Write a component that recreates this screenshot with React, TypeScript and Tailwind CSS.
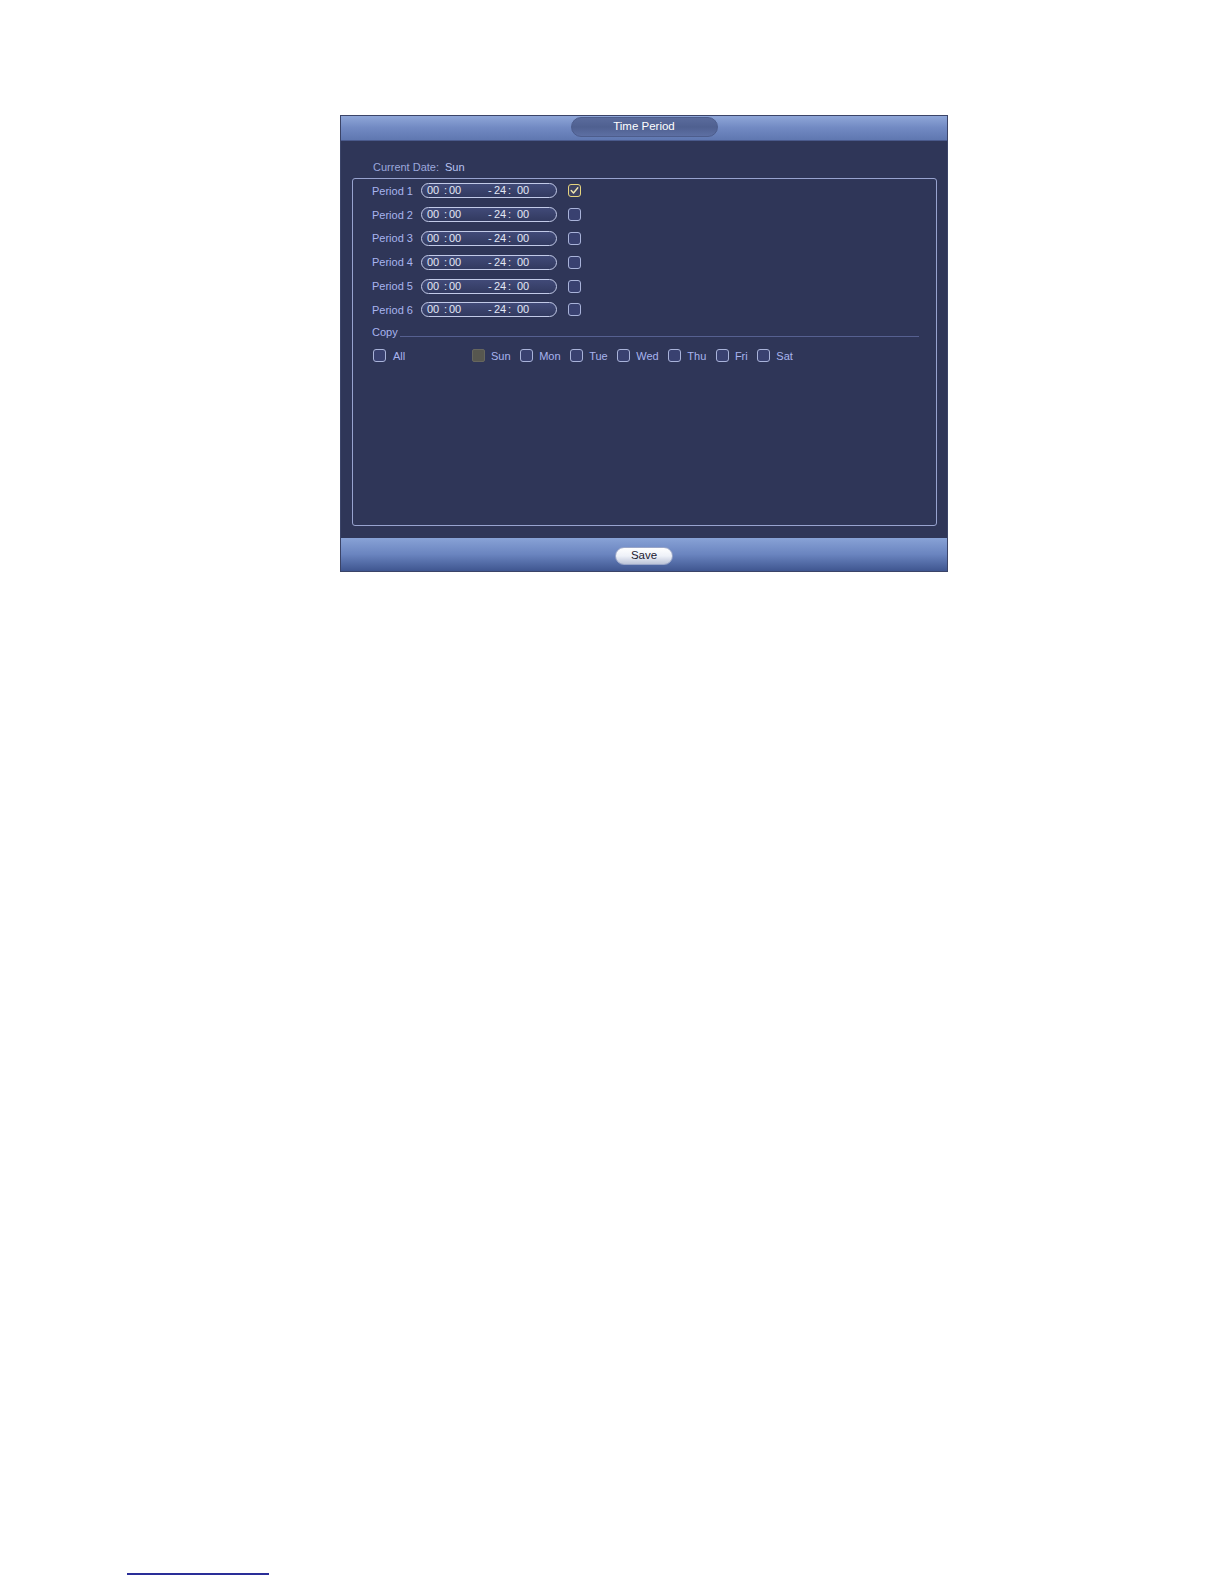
import React from "react";

const font = { fontFamily: '"Liberation Sans", Arial, sans-serif' };

function Box({ checked = false, disabled = false }: { checked?: boolean; disabled?: boolean }) {
  if (checked) {
    return (
      <div className="w-[13px] h-[13px] rounded-[3px] border border-[#e6d47e] bg-[#3d4160] flex items-center justify-center shrink-0">
        <svg width="9" height="9" viewBox="0 0 9 9">
          <path d="M1.2 4.6 L3.5 7 L7.8 1.8" fill="none" stroke="#f1e7b0" strokeWidth="1.4" strokeLinecap="round" strokeLinejoin="round" />
        </svg>
      </div>
    );
  }
  if (disabled) {
    return <div className="w-[13px] h-[13px] rounded-[2px] border border-[#66665e] bg-[#57574f] shrink-0" />;
  }
  return <div className="w-[13px] h-[13px] rounded-[3px] border border-[#a9b3d9] bg-[#394170] shrink-0" />;
}

function TimePill() {
  return (
    <div className="w-[136px] h-[15px] rounded-full border border-[#c2cae8] bg-gradient-to-b from-[#414a78] to-[#323a60] flex items-center pl-[5px] text-[11px] leading-[13px] text-[#e3e7f5] whitespace-nowrap">
      <span className="inline-block w-[17px]">00</span>
      <span className="inline-block w-[5px]">:</span>
      <span className="inline-block w-[39px]">00</span>
      <span className="inline-block w-[6px]">-</span>
      <span className="inline-block w-[14px]">24</span>
      <span className="inline-block w-[9px]">:</span>
      <span className="inline-block">00</span>
    </div>
  );
}

function PeriodRow({ n, checked }: { n: number; checked: boolean }) {
  return (
    <div className="h-[23.8px] flex items-center pl-[19px]">
      <div className="w-[49px] text-[11px] leading-[14px] text-[#a8b4ee] whitespace-nowrap">Period {n}</div>
      <TimePill />
      <div className="ml-[11px]">
        <Box checked={checked} />
      </div>
    </div>
  );
}

function Day({ label, disabled = false }: { label: string; disabled?: boolean }) {
  return (
    <div className="flex items-center gap-[6px] mr-[9.6px]">
      <Box disabled={disabled} />
      <span className="text-[11px] leading-[14px] text-[#a8b4ee]">{label}</span>
    </div>
  );
}

export default function App() {
  return (
    <div className="w-full h-[1584px] bg-white overflow-hidden" style={font}>
      <div className="ml-[340px] mt-[115px] w-[608px] h-[457px] flex flex-col border border-[#3b4468] bg-[#2f3658]">
        {/* header */}
        <div className="h-[25px] shrink-0 bg-gradient-to-b from-[#8fa6d8] via-[#7189c2] to-[#5f77b0] border-b border-[#4a5a8c] flex justify-center pt-[1px]">
          <div className="w-[147px] h-[20px] rounded-full bg-gradient-to-b from-[#5a6b9c] via-[#4f6090] to-[#5d6fa3] border border-[#4d5d8c] flex items-center justify-center text-[11.5px] text-white">
            Time Period
          </div>
        </div>

        {/* body */}
        <div className="flex-1 flex flex-col pt-[19px] pb-[12px] pl-[11px] pr-[10px]">
          <div className="flex items-center pl-[21px] h-[14px] text-[11px] leading-[14px]">
            <span className="text-[#9ca8dc] w-[72px]">Current Date:</span>
            <span className="text-[#b9c4f2]">Sun</span>
          </div>
          <div className="mt-[4px] flex-1 border border-[#98a3cf] rounded-[3px] flex flex-col">
            <PeriodRow n={1} checked />
            <PeriodRow n={2} checked={false} />
            <PeriodRow n={3} checked={false} />
            <PeriodRow n={4} checked={false} />
            <PeriodRow n={5} checked={false} />
            <PeriodRow n={6} checked={false} />

            <div className="mt-[3px] h-[14px] flex items-center pl-[19px] pr-[17px]">
              <span className="text-[11px] leading-[14px] text-[#a8b4ee]">Copy</span>
              <div className="flex-1 h-px mt-[9px] ml-[2px] bg-[#566090]" />
            </div>

            <div className="mt-[10px] h-[14px] flex items-center pl-[20px]">
              <div className="w-[99px] flex items-center gap-[7px]">
                <Box />
                <span className="text-[11px] leading-[14px] text-[#a8b4ee]">All</span>
              </div>
              <Day label="Sun" disabled />
              <Day label="Mon" />
              <Day label="Tue" />
              <Day label="Wed" />
              <Day label="Thu" />
              <Day label="Fri" />
              <Day label="Sat" />
            </div>
          </div>
        </div>

        {/* footer */}
        <div className="h-[33px] shrink-0 bg-gradient-to-b from-[#88a2d6] via-[#6a84bf] to-[#3f5690] flex items-center justify-center pt-[3px]">
          <div className="w-[58px] h-[18px] rounded-full bg-gradient-to-b from-white via-[#eef1f8] to-[#bcc4d8] border border-[#9aa6c8] flex items-center justify-center text-[11.5px] text-[#1c2030]">
            Save
          </div>
        </div>
      </div>

      <div className="ml-[127px] mt-[1001px] w-[142px] h-[2px] bg-[#2a2e98]" />
    </div>
  );
}
